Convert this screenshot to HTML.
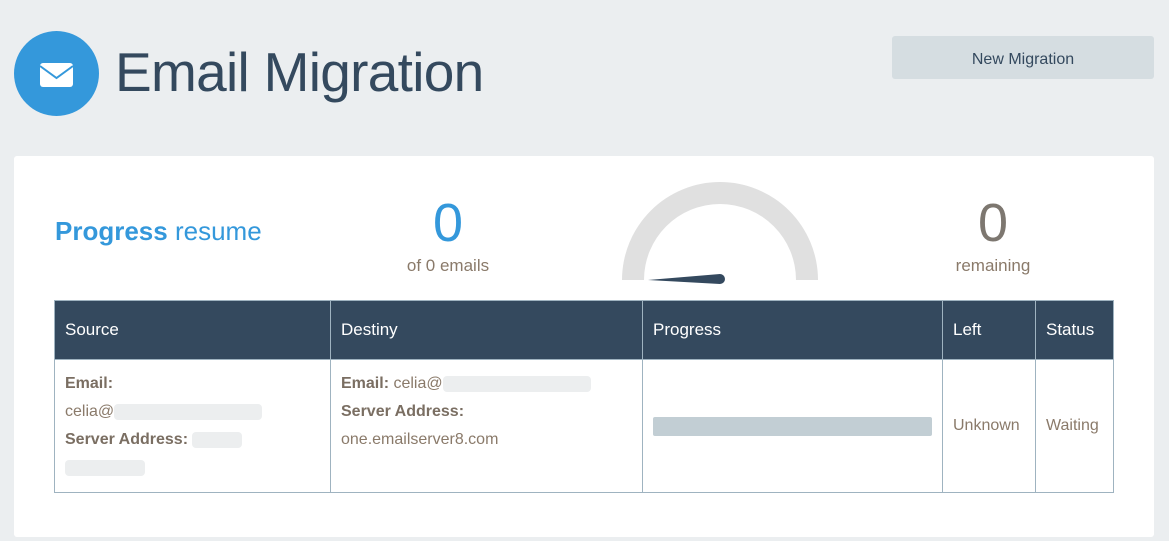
<!DOCTYPE html>
<html><head><meta charset="utf-8"><style>
*{box-sizing:border-box;margin:0;padding:0}
body{width:1169px;height:541px;background:#ebeef0;font-family:"Liberation Sans","DejaVu Sans",sans-serif;position:relative;overflow:hidden}
.icon{position:absolute;left:14px;top:31px;width:85px;height:85px;border-radius:50%;background:#3498db}
h1{position:absolute;left:115px;top:40px;font-size:55px;font-weight:normal;color:#34495e;letter-spacing:-0.7px}
.btn{position:absolute;left:892px;top:36px;width:262px;height:43px;background:#d5dde1;border-radius:3px;color:#34495e;font-size:16px;text-align:center;line-height:47px}
.card{position:absolute;left:14px;top:156px;width:1140px;height:381px;background:#fff;border-radius:3px}
.prog{position:absolute;left:55px;top:216px;font-size:26px;color:#3498db}
.big{position:absolute;font-size:54px;text-align:center;width:200px}
.sub{position:absolute;font-size:17px;color:#8a7a6a;text-align:center;width:200px}
table{position:absolute;left:54px;top:300px;border-collapse:collapse;font-size:16px}
th{background:#34495e;color:#fff;font-weight:normal;text-align:left;padding:0 10px;height:59px;border:1px solid #9fb3c0;font-size:17px}
td{border:1px solid #9fb3c0;vertical-align:top;color:#8a7a6a;padding:10px 10px;line-height:28px;height:133px}
b{color:#7a6e62}
.blur{display:inline-block;background:#eceeef;height:16px;vertical-align:middle;border-radius:4px}
</style></head><body>
<div class="icon"><svg width="85" height="85"><rect x="26" y="32" width="33" height="24" rx="3" fill="#fff"/><path d="M26 35 L42.5 47 L59 35" stroke="#3498db" stroke-width="2" fill="none"/></svg></div>
<h1>Email Migration</h1>
<div class="btn">New Migration</div>
<div class="card"></div>
<div class="prog"><b style="color:#3498db">Progress</b> resume</div>
<div class="big" style="left:348px;top:192px;color:#3498db">0</div>
<div class="sub" style="left:348px;top:256px">of 0 emails</div>
<div class="big" style="left:893px;top:192px;color:#7d7770">0</div>
<div class="sub" style="left:893px;top:256px">remaining</div>
<svg style="position:absolute;left:600px;top:170px" width="240" height="120">
<path d="M22 110 A98 98 0 0 1 218 110 L196 110 A76 76 0 0 0 44 110 Z" fill="#e0e0e0"/>
<path d="M48 110 L120 104 A4 4 0 0 1 120 114 Z" fill="#34495e"/>
</svg>
<table>
<tr><th style="width:276px">Source</th><th style="width:312px">Destiny</th><th style="width:300px">Progress</th><th style="width:93px">Left</th><th style="width:78px">Status</th></tr>
<tr><td><b>Email:</b><br>celia@<span class="blur" style="width:148px"></span><br><b>Server Address:</b> <span class="blur" style="width:50px"></span><br><span class="blur" style="width:80px"></span></td>
<td><b>Email:</b> celia@<span class="blur" style="width:148px"></span><br><b>Server Address:</b><br>one.emailserver8.com</td>
<td style="vertical-align:middle"><div style="height:19px;background:#c2ced4;border-radius:2px"></div></td>
<td style="vertical-align:middle">Unknown</td>
<td style="vertical-align:middle">Waiting</td></tr>
</table>
</body></html>
